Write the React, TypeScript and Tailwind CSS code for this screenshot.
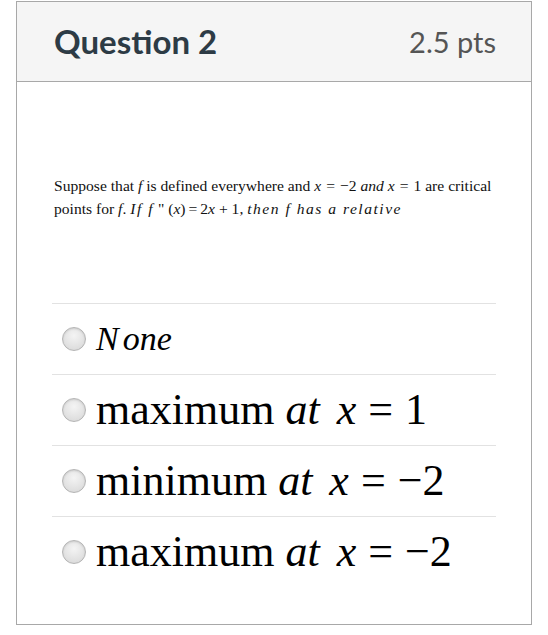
// Quiz question card
const serif = { fontFamily: '"Liberation Serif", "Times New Roman", serif' };

function Radio() {
  return (
    <span className="inline-block w-[24px] h-[24px] shrink-0 rounded-full border border-[#b5b5b5] bg-[radial-gradient(circle_at_50%_35%,#f4f4f4,#d6d6d6)] shadow-[inset_0_1px_2px_rgba(0,0,0,0.12)]" />
  );
}

function I({ children, className = "" }: { children: React.ReactNode; className?: string }) {
  return (
    <i className={"italic " + className} style={serif}>
      {children}
    </i>
  );
}

const options = [
  <span key="a" className="text-[34px] relative -top-[3px]">
    <I>N</I>
    <I className="ml-[4px]">one</I>
  </span>,
  <span key="b">
    maximum <I className="mr-[6px]">at</I> <I>x</I>
    <span className="mx-[12px]">=</span>1
  </span>,
  <span key="c">
    minimum <I className="mr-[6px]">at</I> <I>x</I>
    <span className="mx-[12px]">=</span>−2
  </span>,
  <span key="d">
    maximum <I className="mr-[6px]">at</I> <I>x</I>
    <span className="mx-[12px]">=</span>−2
  </span>,
];

export default function App() {
  return (
    <div className="w-[548px] h-[635px] bg-white pt-[1px] px-4">
      <div className="h-[624px] border border-[#a8a8a8] flex flex-col">
        <div
          className="h-[80px] shrink-0 bg-[#f5f5f5] border-b border-[#a8a8a8] flex items-center justify-between pl-[37px] pr-[35px]"
          style={{ fontFamily: "Lato, sans-serif" }}
        >
          <h2 className="text-[33px] font-bold text-[#2d3b45] leading-none">Question 2</h2>
          <span className="text-[29px] text-[#555] leading-none">2.5 pts</span>
        </div>
        <div className="px-[37px] pt-[92px]" style={serif}>
          <p className="text-[15.6px] leading-[23px] text-[#111] whitespace-nowrap">
            Suppose that <I>f</I> is defined everywhere and <I>x</I>
            <span className="mx-[5px]">=</span>−2 <I>and</I> <I>x</I>
            <span className="mx-[5px]">=</span>1 are critical
            <br />
            points for <I>f</I>. <I className="tracking-[1.5px]">If f</I> " (<I>x</I>)
            <span className="mx-[3px]">=</span>2<I>x</I> + 1,{" "}
            <I className="tracking-[1.5px]">then f has a relative</I>
          </p>
          <div className="mt-[83px] -mx-[2px]">
            {options.map((o, i) => (
              <div
                key={i}
                className="h-[71px] border-t border-[#e2e2e2] flex items-center gap-[10px] pl-[10px] text-[44px] text-black"
              >
                <Radio />
                <span className="leading-none">{o}</span>
              </div>
            ))}
          </div>
        </div>
      </div>
    </div>
  );
}
